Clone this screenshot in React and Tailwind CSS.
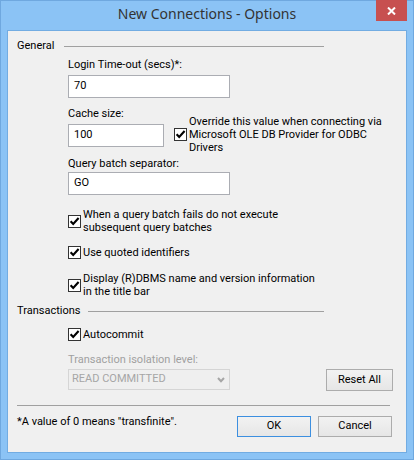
import React from 'react';

function CheckBox() {
  return (
    <span className="flex h-[13px] w-[13px] shrink-0 items-center justify-center border border-[#333333] bg-white">
      <svg width="11" height="11" viewBox="0 0 11 11">
        <path d="M1.6 5.2 L4.2 8 L9.6 2" fill="none" stroke="#000" strokeWidth="2.1" />
      </svg>
    </span>
  );
}

function CheckRow({ lines, className = '' }) {
  return (
    <div className={`flex items-center gap-[2px] ${className}`}>
      <CheckBox />
      <div className={lines.length > 1 ? 'leading-[13px]' : 'leading-[15px]'}>
        {lines.map((l) => (
          <div key={l}>{l}</div>
        ))}
      </div>
    </div>
  );
}

function TextBox({ value, width }) {
  return (
    <div className={`flex h-[23px] ${width} items-center border border-[#abadb3] bg-white pl-[5px] text-black`}>
      {value}
    </div>
  );
}

function Button({ label, isDefault, className = '' }) {
  return (
    <button
      type="button"
      className={`flex h-[21px] items-center justify-center border bg-gradient-to-b from-[#f2f2f2] to-[#e6e6e6] text-black ${
        isDefault ? 'border-[#3c8fe0]' : 'border-[#acacac]'
      } ${className}`}
    >
      {label}
    </button>
  );
}

export default function App() {
  return (
    <div className="flex h-[460px] w-[414px] flex-col border border-[#6fa8df] bg-[#8bc3f5] font-['Roboto','Noto_Sans',sans-serif] text-[11px] text-black">
      {/* title bar */}
      <div className="relative h-[29px] shrink-0">
        <div className="pt-[3px] text-center font-['Noto_Sans',sans-serif] text-[14px] leading-[20px] text-[#333333]">
          New Connections - Options
        </div>
        <button
          type="button"
          className="absolute -top-px right-[6px] flex h-[21px] w-[31px] items-center justify-center bg-[#c75050]"
        >
          <svg width="9" height="8" viewBox="0 0 9 8">
            <path d="M1 0.5 L8 7.5 M8 0.5 L1 7.5" stroke="#fff" strokeWidth="2" />
          </svg>
        </button>
      </div>

      {/* client area */}
      <div className="mx-[6px] mb-[6px] flex flex-1 flex-col border border-[#72ace2] bg-[#f0f0f0]">
        {/* General */}
        <div className="mt-[7px] flex h-[15px] items-start pl-[9px] leading-[15px]">
          <span className="w-[47px] shrink-0">General</span>
          <span className="mt-[8px] h-px w-[260px] bg-[#a0a0a0]" />
        </div>

        <div className="flex flex-col pl-[60px]">
          <div className="mt-[4px] h-[15px] leading-[15px]">Login Time-out (secs)*:</div>
          <div className="mt-[3px]">
            <TextBox value="70" width="w-[162px]" />
          </div>

          <div className="mt-[8px] flex h-[49px] items-start">
            <div className="flex flex-col">
              <div className="h-[15px] leading-[15px]">Cache size:</div>
              <div className="mt-[3px]">
                <TextBox value="100" width="w-[96px]" />
              </div>
            </div>
            <CheckRow
              className="ml-[10px] mt-[9px]"
              lines={['Override this value when connecting via', 'Microsoft OLE DB Provider for ODBC', 'Drivers']}
            />
          </div>

          <div className="mt-[1px] h-[15px] leading-[15px]">Query batch separator:</div>
          <div className="mt-[1px]">
            <TextBox value="GO" width="w-[162px]" />
          </div>

          <CheckRow
            className="mt-[13px]"
            lines={['When a query batch fails do not execute', 'subsequent query batches']}
          />
          <CheckRow className="mt-[11px]" lines={['Use quoted identifiers']} />
          <CheckRow
            className="mt-[12px]"
            lines={['Display (R)DBMS name and version information', 'in the title bar']}
          />
        </div>

        {/* Transactions */}
        <div className="mt-[5px] flex h-[15px] items-start pl-[9px] leading-[15px]">
          <span className="w-[71px] shrink-0">Transactions</span>
          <span className="mt-[8px] h-px w-[236px] bg-[#a0a0a0]" />
        </div>

        <div className="flex flex-col pl-[60px] pr-[13px]">
          <CheckRow className="mt-[9px]" lines={['Autocommit']} />
          <div className="flex items-end justify-between">
            <div className="flex flex-col">
              <div className="mt-[10px] h-[15px] leading-[15px] text-[#a0a0a0]">Transaction isolation level:</div>
              <div className="mt-[2px] flex h-[21px] w-[162px] items-center justify-between border border-[#d5d5d5] bg-[#efefef] pl-[3px] pr-[4px] text-[#a6a6a6]">
                <span>READ COMMITTED</span>
                <svg width="8" height="6" viewBox="0 0 8 6">
                  <path d="M1 1 L4 4.2 L7 1" fill="none" stroke="#a6a6a6" strokeWidth="2" />
                </svg>
              </div>
            </div>
            <Button label="Reset All" className="mb-[-1px] h-[22px] w-[67px]" />
          </div>
        </div>

        <div className="ml-[9px] mr-[16px] mt-[15px] h-px bg-[#a0a0a0]" />

        <div className="mt-[8px] flex items-start pl-[9px] pr-[14px]">
          <div className="h-[15px] leading-[15px]">*A value of 0 means "transfinite".</div>
          <div className="ml-auto mt-[2px] flex gap-[7px]">
            <Button label="OK" isDefault className="w-[74px]" />
            <Button label="Cancel" className="w-[74px]" />
          </div>
        </div>
      </div>
    </div>
  );
}
